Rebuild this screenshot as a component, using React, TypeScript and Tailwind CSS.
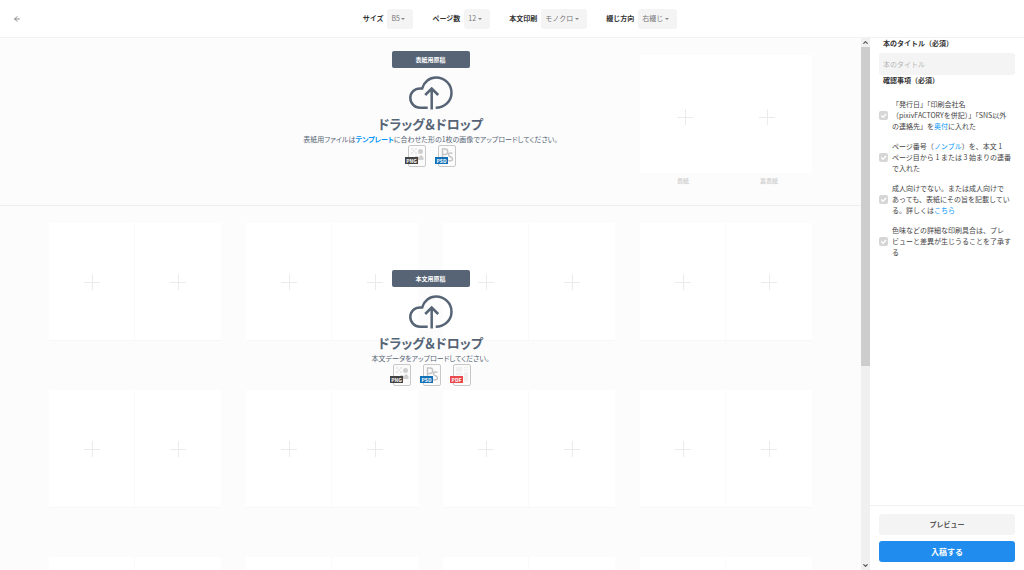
import React, { useState } from 'react';
import { ArrowLeft, ChevronDown, ChevronUp } from 'lucide-react';

type FileKind = 'PNG' | 'PSD' | 'PDF';

const badgeColors: Record<FileKind, string> = {
  PNG: '#434343',
  PSD: '#0f70b7',
  PDF: '#e9484d',
};

interface Setting {
  id: string;
  label: string;
  width: string;
  options: string[];
}

const settings: Setting[] = [
  { id: 'size', label: 'サイズ', width: 'w-[26px]', options: ['B5', 'A5', 'A4'] },
  { id: 'pages', label: 'ページ数', width: 'w-[26px]', options: ['12', '16', '20', '24'] },
  { id: 'print', label: '本文印刷', width: 'w-[46px]', options: ['モノクロ', 'カラー'] },
  { id: 'binding', label: '綴じ方向', width: 'w-[39px]', options: ['右綴じ', '左綴じ'] },
];

const SettingSelect: React.FC<{ setting: Setting }> = ({ setting }) => (
  <div className="flex items-center gap-1">
    <label htmlFor={setting.id} className="font-bold text-[#333]">
      {setting.label}
    </label>
    <div className="grid items-center">
      <select
        id={setting.id}
        className={`[grid-area:1/1] h-5 appearance-none rounded-[3px] bg-[#f4f4f4] pl-1 text-[#777] ${setting.width}`}
      >
        {setting.options.map(o => (
          <option key={o}>{o}</option>
        ))}
      </select>
      <svg viewBox="0 0 4 2" className="pointer-events-none [grid-area:1/1] mr-2 h-[2px] w-1 justify-self-end" fill="#888">
        <path d="M0 0h4L2 2z" />
      </svg>
    </div>
  </div>
);

const CloudUpload = () => (
  <svg viewBox="0 0 44 34" className="h-[34px] w-11" fill="none" stroke="#566475" strokeWidth="2.500">
    <path d="M18.700 31.800H11a9.700 9.700 0 0 1-9.700-9.700c0-5.400 4.300-9.700 9.700-9.700h2.200C15 5.800 20.600 1.500 27 1.500c8.600 0 15.500 6.800 15.500 15.200 0 8.400-6.900 15.100-15.800 15.100" />
    <path d="M22.700 33.500V12.500M16.200 19l6.500-6.500 6.500 6.500" />
  </svg>
);

const FileIcon: React.FC<{ kind: FileKind }> = ({ kind }) => (
  <svg viewBox="0 0 22 22" className="size-[22px]" role="img" aria-label={kind}>
    <rect x="3.500" y="0.500" width="17" height="21" rx="1.500" fill="#fbfbfb" stroke="#c8c8c8" />
    {kind === 'PNG' && (
      <g fill="#cfcfcf">
        <circle cx="15.500" cy="6.500" r="2.500" />
        <path d="M9 14l2-3.500 2.500 1.500 3-2 2 2.500V15H9z" />
        <path d="M6 3h2v2H6zM10 3h2v2h-2zM8 5h2v2H8zM6 7h2v2H6zM10 7h2v2h-2z" opacity="0.400" />
      </g>
    )}
    {kind === 'PSD' && (
      <g fill="none" stroke="#c6c6c6" strokeWidth="1.500">
        <path d="M7.500 12V4H10a2.700 2.700 0 0 1 0 5.400H7.500" />
        <path d="M17.500 8.500c-1.500-1-4-.800-4 1.200 0 2.300 4 1.800 4 4.200 0 2.200-2.700 2.300-4.200 1.400" />
      </g>
    )}
    {kind === 'PDF' && (
      <g fill="#f0f0f0">
        <path d="M6 3h6v4.500H6zM14 3h4v1h-4zM14 5.500h4v1h-4zM6 9h6v2H6zM14 8.500h4v9h-4z" />
      </g>
    )}
    <rect x="0" y="12" width="13" height="7" fill={badgeColors[kind]} />
    <text x="6.500" y="17.500" textAnchor="middle" fontSize="5" fontWeight="700" fill="#fff">
      {kind}
    </text>
  </svg>
);

interface DropZoneProps {
  title: string;
  kinds: FileKind[];
  children: React.ReactNode;
}

const DropZone: React.FC<DropZoneProps> = ({ title, kinds, children }) => (
  <div className="z-10 flex flex-col items-center text-[#566475] [font-feature-settings:'palt']">
    <button type="button" className="h-[17px] w-[78px] rounded-xs bg-[#566475] text-[6px] leading-none font-bold text-white">
      {title}
    </button>
    <div className="mt-2">
      <CloudUpload />
    </div>
    <h2 className="mt-1 text-[13px] leading-5 font-bold">ドラッグ＆ドロップ</h2>
    <p className="text-[7px] leading-[11px]">{children}</p>
    <div className="flex gap-2">
      {kinds.map(k => (
        <FileIcon key={k} kind={k} />
      ))}
    </div>
  </div>
);

const Plus = () => (
  <svg viewBox="0 0 16 16" className="size-4" stroke="#ebebeb">
    <path d="M0 8.500h16M8.500 0v16" />
  </svg>
);

const Spread = () => (
  <div className="grid aspect-[172/118] grid-cols-2 border-b border-[#f7f7f7] bg-white">
    <div className="flex items-center justify-center border-r border-[#fafafa]">
      <Plus />
    </div>
    <div className="flex items-center justify-center">
      <Plus />
    </div>
  </div>
);

const Link: React.FC<{ children: React.ReactNode }> = ({ children }) => (
  <a href="#" className="text-[#0096fa]">
    {children}
  </a>
);

const checks: { id: string; body: React.ReactNode }[] = [
  {
    id: 'colophon',
    body: (
      <>
        「発行日」「印刷会社名
        <br />
        （pixivFACTORYを併記）」「SNS以外
        <br />
        の連絡先」を<Link>奥付</Link>に入れた
      </>
    ),
  },
  {
    id: 'numbering',
    body: (
      <>
        ページ番号（<Link>ノンブル</Link>）を、本文 1<br />
        ページ目から 1 または 3 始まりの連番
        <br />
        で入れた
      </>
    ),
  },
  {
    id: 'rating',
    body: (
      <>
        成人向けでない。または成人向けで
        <br />
        あっても、表紙にその旨を記載してい
        <br />
        る。詳しくは<Link>こちら</Link>
      </>
    ),
  },
  {
    id: 'color',
    body: (
      <>
        色味などの詳細な印刷具合は、プレ
        <br />
        ビューと差異が生じうることを了承す
        <br />る
      </>
    ),
  },
];

const CheckItem: React.FC<{ id: string; children: React.ReactNode }> = ({ id, children }) => (
  <li className="flex items-center gap-1">
    <span className="grid shrink-0 place-items-center">
      <input id={id} type="checkbox" className="size-[9px] appearance-none rounded-xs bg-[#d6d6d6] [grid-area:1/1]" />
      <svg viewBox="0 0 10 10" className="pointer-events-none size-[9px] [grid-area:1/1]" fill="none" stroke="#fff" strokeWidth="1.500">
        <path d="M2.500 5l2 2 3.500-3.800" />
      </svg>
    </span>
    <label htmlFor={id} className="leading-[11px] whitespace-nowrap text-[#444]">
      {children}
    </label>
  </li>
);

export default function App() {
  const [title, setTitle] = useState('');

  return (
    <div
      lang="ja"
      className="flex h-screen flex-col bg-white font-['Noto_Sans_CJK_JP',sans-serif] text-[7px] leading-[11px]"
    >
      <header className="flex h-[38px] shrink-0 items-center border-b border-[#f2f2f2] px-[13px]">
        <a href="#" aria-label="戻る" className="w-4 text-[#888]">
          <ArrowLeft className="size-2" strokeWidth={3} />
        </a>
        <div className="flex flex-1 justify-center gap-[19px]">
          {settings.map(s => (
            <SettingSelect key={s.id} setting={s} />
          ))}
        </div>
      </header>

      <div className="flex min-h-0 flex-1">
        <main className="min-w-0 flex-1 overflow-y-auto bg-[#fcfcfc] [scrollbar-width:none]">
          {/* Cover */}
          <section className="grid h-[168px] border-b border-[#eeeeee]">
            <div className="grid grid-cols-4 gap-x-[25px] px-[49px] pt-[17px] [grid-area:1/1]">
              <div className="col-start-4">
                <div className="flex aspect-[172/118] items-center bg-white px-1 pt-[5px]">
                  <div className="flex flex-1 justify-center">
                    <Plus />
                  </div>
                  <div className="flex flex-1 justify-center">
                    <Plus />
                  </div>
                </div>
                <div className="grid grid-cols-2 pt-[2px] text-center text-[6px] font-bold text-[#d4d4d4]">
                  <span>表紙</span>
                  <span>裏表紙</span>
                </div>
              </div>
            </div>
            <div className="justify-self-center pt-[13px] [grid-area:1/1]">
              <DropZone title="表紙用原稿" kinds={['PNG', 'PSD']}>
                表紙用ファイルは
                <a href="#" className="font-bold text-[#0096fa]">
                  テンプレート
                </a>
                に合わせた形の1枚の画像でアップロードしてください。
              </DropZone>
            </div>
          </section>

          {/* Pages */}
          <section className="grid">
            <div className="grid grid-cols-4 gap-x-[25px] gap-y-[49px] px-[49px] pt-[17px] pb-4 [grid-area:1/1]">
              {Array.from({ length: 16 }, (_, i) => (
                <Spread key={i} />
              ))}
            </div>
            <div className="self-start justify-self-center pt-16 [grid-area:1/1]">
              <DropZone title="本文用原稿" kinds={['PNG', 'PSD', 'PDF']}>
                本文データをアップロードしてください。
              </DropZone>
            </div>
          </section>
        </main>

        {/* Scroll bar */}
        <div className="flex w-[9px] shrink-0 flex-col items-center justify-between bg-[#f0f0f0] text-[#555]" aria-hidden="true">
          <ChevronUp className="my-px size-[7px] shrink-0" strokeWidth={4} />
          <div className="min-h-0 w-full flex-1">
            <div className="h-[62%] bg-[#cdcdcd]" />
          </div>
          <ChevronDown className="my-px size-[7px] shrink-0" strokeWidth={4} />
        </div>

        <aside className="flex w-[154px] shrink-0 flex-col">
          <div className="min-h-0 flex-1 px-[9px]">
            <label htmlFor="title" className="block pl-1 font-bold text-[#333]">
              本のタイトル（必須）
            </label>
            <input
              id="title"
              value={title}
              onChange={e => setTitle(e.target.value)}
              placeholder="本のタイトル"
              className="mt-1 block h-[22px] w-full rounded-[3px] bg-[#f4f4f4] px-1 placeholder:text-[#b5b5b5]"
            />
            <h3 className="pl-1 font-bold text-[#333]">確認事項（必須）</h3>
            <ul className="mt-[13px] flex flex-col gap-[9px]">
              {checks.map(c => (
                <CheckItem key={c.id} id={c.id}>
                  {c.body}
                </CheckItem>
              ))}
            </ul>
          </div>
          <div className="flex flex-col gap-[6px] border-t border-[#f0f0f0] px-[9px] py-2">
            <button type="button" className="h-[21px] rounded-[3px] bg-[#f4f4f4] font-bold text-[#555]">
              プレビュー
            </button>
            <button type="button" className="h-[21px] rounded-[3px] bg-[#208dee] text-[8px] font-bold text-white">
              入稿する
            </button>
          </div>
        </aside>
      </div>
    </div>
  );
}
